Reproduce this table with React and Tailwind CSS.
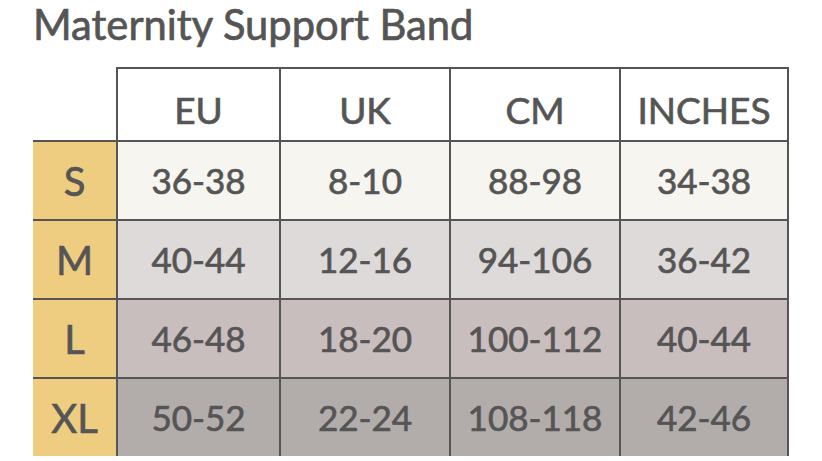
import React from 'react'

const rows = [
  { size: 'S', bg: 'bg-[#f7f5f0]', values: ['36-38', '8-10', '88-98', '34-38'] },
  { size: 'M', bg: 'bg-[#dedad9]', values: ['40-44', '12-16', '94-106', '36-42'] },
  { size: 'L', bg: 'bg-[#c9bebe]', values: ['46-48', '18-20', '100-112', '40-44'] },
  { size: 'XL', bg: 'bg-[#b2adab]', values: ['50-52', '22-24', '108-118', '42-46'] },
]

const headers = ['EU', 'UK', 'CM', 'INCHES']

export default function App() {
  return (
    <div className="w-[822px] h-[461px] bg-white overflow-hidden pl-[33px] text-[#555555] [-webkit-text-stroke:0.7px_#555555]" style={{ fontFamily: 'Lato, "Open Sans", sans-serif' }}>
      <h1 className="text-[41.7px] font-normal leading-[46px] pt-[1px]">Maternity Support Band</h1>

      <div className="mt-[20px] grid grid-cols-[83px_163px_170px_170px_170px]">
        <div className="h-[75px] border-b-2 border-[#555555]" />
        {headers.map((h, i) => (
          <div
            key={h}
            className={`h-[75px] flex items-center justify-center pt-[10px] bg-white border-t-2 border-b-2 border-l-2 border-[#555555] text-[37px] ${i === 3 ? 'border-r-2' : ''}`}
          >
            {h}
          </div>
        ))}

        {rows.map((row, r) => {
          const last = r === rows.length - 1
          return (
            <React.Fragment key={row.size}>
              <div className={`${last ? 'h-[77px]' : 'h-[79px] border-b-2'} border-[#555555] bg-[#efcd80] flex items-center justify-center text-[40px]`}>
                {row.size}
              </div>
              {row.values.map((v, i) => (
                <div
                  key={i}
                  className={`${last ? 'h-[77px]' : 'h-[79px] border-b-2'} ${row.bg} border-l-2 border-[#555555] flex items-center justify-center text-[35px] ${i === 3 ? 'border-r-2' : ''}`}
                >
                  {v}
                </div>
              ))}
            </React.Fragment>
          )
        })}
      </div>
    </div>
  )
}
